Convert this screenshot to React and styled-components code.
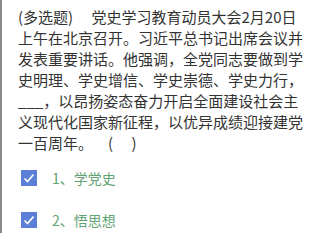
import React from "react";
import styled, { createGlobalStyle } from "styled-components";

const Global = createGlobalStyle`
  html, body { margin: 0; padding: 0; background: #fff; }
  body { font-family: "Noto Sans CJK SC", "Noto Sans", sans-serif; }
`;

const Panel = styled.div`
  width: 321px;
  height: 233px;
  box-sizing: border-box;
  border-left: 2px solid #8c8c8c;
  padding: 6px 12px 0 16px;
  overflow: hidden;
`;

const Question = styled.p`
  margin: 0;
  font-size: 15px;
  line-height: 21px;
  color: #333;
  white-space: pre-wrap;
  text-spacing-trim: space-all;
`;

const Options = styled.div`
  display: flex;
  flex-direction: column;
  gap: 26px;
  margin-top: 17px;
  padding-left: 3px;
`;

const Option = styled.div`
  display: flex;
  align-items: center;
  gap: 15px;
  height: 16px;
`;

const Box = styled.span`
  width: 16px;
  height: 16px;
  background: #5b7fd6;
  display: flex;
  align-items: center;
  justify-content: center;
`;

const Label = styled.span`
  font-size: 14px;
  color: #62a373;
  line-height: 16px;
`;

const Check = () => (
  <svg width="12" height="12" viewBox="0 0 12 12">
    <path d="M1.5 6.5 L4.5 9.5 L10.5 2.5" fill="none" stroke="#fff" strokeWidth="1.6" />
  </svg>
);

export default function App() {
  return (
    <>
      <Global />
      <Panel>
        <Question>
          {"(多选题)　 党史学习教育动员大会2月20日上午在北京召开。习近平总书记出席会议并发表重要讲话。他强调，全党同志要做到学史明理、学史增信、学史崇德、学史力行，___，以昂扬姿态奋力开启全面建设社会主义现代化国家新征程，以优异成绩迎接建党一百周年。　(　 )"}
        </Question>
        <Options>
          <Option>
            <Box><Check /></Box>
            <Label>1、学党史</Label>
          </Option>
          <Option>
            <Box><Check /></Box>
            <Label>2、悟思想</Label>
          </Option>
        </Options>
      </Panel>
    </>
  );
}
